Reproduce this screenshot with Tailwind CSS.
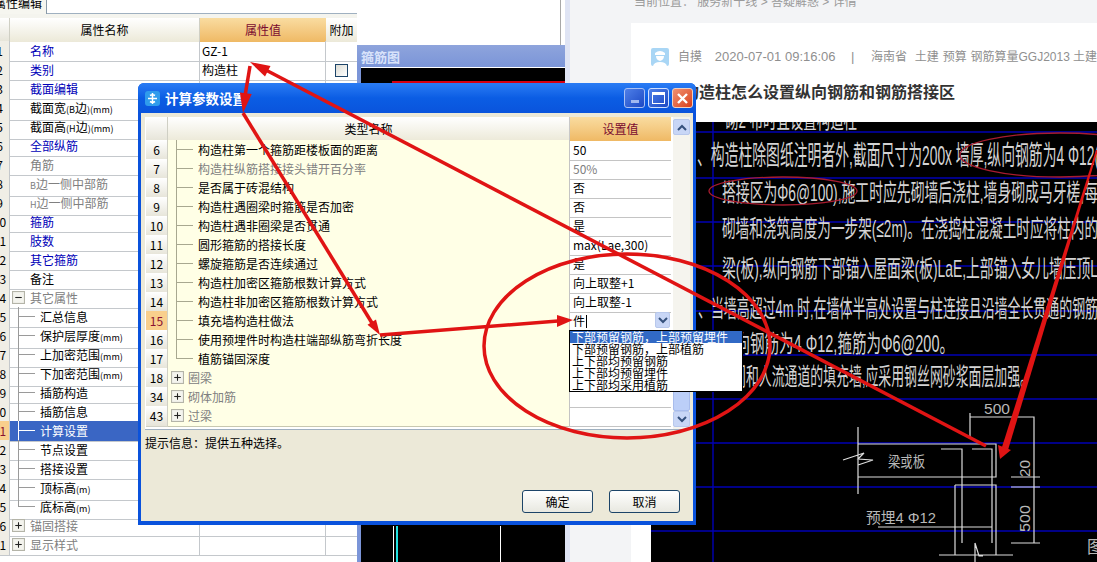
<!DOCTYPE html>
<html lang="zh-CN">
<head>
  <meta charset="UTF-8">
  <title>计算参数设置</title>
  <script src="https://cdn.jsdelivr.net/npm/@tailwindcss/browser@4"></script>
</head>
<body class="w-[1097px] h-[562px] overflow-hidden bg-white text-[12px] leading-[18px] text-black font-['Noto_Sans_CJK_SC',sans-serif]">
  <div class="relative w-[1097px] h-[562px] overflow-hidden flex">

    <!-- Property editor -->
    <div class="w-[357px] shrink-0 flex flex-col bg-white">
      <div class="h-[14px] flex overflow-hidden">
        <div class="w-[47px] h-[14px] border-r border-[#8a9aa8] bg-[#f6f6f0] overflow-hidden">
          <div class="-ml-[6px] -mt-[6px] whitespace-nowrap">属性编辑</div>
        </div>
        <div class="flex-1 border-b border-[#9fb0c0]"></div>
      </div>
      <div class="h-[4px] bg-[#f4f4ee]"></div>
      <div class="grid grid-cols-[10px_190px_126px_31px] h-[23px] text-center leading-[24px]">
        <div class="bg-linear-to-b from-white to-[#e6e4d8] border-r border-[#cfcfc4]"></div>
        <div class="bg-linear-to-b from-white to-[#ece9d8] border-r border-[#cfcfc4]">属性名称</div>
        <div class="bg-linear-to-b from-[#f9dca0] to-[#efb964] text-[#7a0b30]">属性值</div>
        <div class="bg-linear-to-b from-white to-[#ece9d8]">附加</div>
      </div>
      <div id="propRows"></div>
    </div>

    <!-- Stirrup diagram window -->
    <div class="w-[208px] shrink-0 flex flex-col bg-white">
      <div class="h-[45px] border-r border-[#a8a8a8] mr-[4px]"></div>
      <div class="h-[22px] bg-linear-to-b from-[#8ea4dc] to-[#7b95d8] pl-[4px] text-[13px] leading-[24px] font-bold text-[#d8e2fa]">箍筋图</div>
      <div class="flex-1 bg-[#7b95d8] pl-[4px]">
        <div class="relative h-full bg-black border-t border-white">
          <div class="absolute left-[31px] right-0 top-[13px] h-[3px] bg-[#d80010]"></div>
          <div class="absolute left-[32px] top-[458px] bottom-0 w-px bg-white"></div>
          <div class="absolute left-[35px] top-[458px] bottom-0 w-[2px] bg-[#20e0e0]"></div>
          <div class="absolute left-[139px] top-[458px] bottom-0 w-px bg-white"></div>
        </div>
      </div>
    </div>

    <div class="w-[5px] shrink-0 bg-[#dfe4f4]"></div>

    <!-- Article page -->
    <div class="flex-1 min-w-0 flex flex-col bg-[#f3f4f6] pl-[61px]">
      <div class="h-[23px] relative overflow-hidden">
        <div class="-mt-[6px] pl-[3px] whitespace-nowrap text-[12px] leading-[16px] text-[#9a9a9a] font-['Liberation_Sans','Noto_Sans_CJK_SC',sans-serif]">当前位置： 服务新干线 &gt; 答疑解惑 &gt; 详情</div>
      </div>
      <div class="flex-1 min-h-0 bg-white pl-[20px] flex flex-col overflow-hidden font-['Liberation_Sans','Noto_Sans_CJK_SC',sans-serif]">
        <div class="h-[50px] pt-[18px] flex items-center whitespace-nowrap text-[12px] text-[#8f8f8f]">
          <svg class="w-[18px] h-[18px] shrink-0" viewBox="0 0 18 18">
            <rect width="18" height="18" rx="2" fill="#a9d6f5"/>
            <path d="M4 5q5-4 10 0v2H4zM5 8h8q0 4-4 5-4-1-4-5zM2 18q1-4 7-4t7 4z" fill="#fff"/>
          </svg>
          <span class="ml-[9px] w-[37px]">自摸</span>
          <span class="w-[137px] text-[13px]">2020-07-01 09:16:06</span>
          <span class="w-[20px] text-[13px]">|</span>
          <span class="w-[44px]">海南省</span>
          <span class="w-[28px]">土建</span>
          <span class="w-[28px]">预算</span>
          <span class="w-[103px]">钢筋算量GGJ2013</span>
          <span>土建</span>
        </div>
        <div class="h-[49px] pt-[8px] text-[16px] leading-[24px] font-bold text-[#333] whitespace-nowrap">填充构造柱怎么设置纵向钢筋和钢筋搭接区</div>
        <svg class="flex-1 min-h-0 w-[446px] bg-black" viewBox="651 122 446 440" font-size="24" fill="#d4d4d4">
          <g stroke="#0000b4" stroke-width="1.4">
            <path d="M651 132H1097M651 178H1097M651 222H1097M651 266H1097M651 311H1097M651 355H1097M651 399H1097M651 443H1097M651 487H1097M651 531H1097M713 122V562"/>
          </g>
          <g>
            <text x="725" y="128" textLength="132" lengthAdjust="spacingAndGlyphs">砌2 布时宜设置构造柱</text>
            <text x="697" y="165" font-size="27" textLength="402" lengthAdjust="spacingAndGlyphs">、构造柱除图纸注明者外,截面尺寸为200x 墙厚,纵向钢筋为4 Φ12(</text>
            <text x="722" y="201" textLength="376" lengthAdjust="spacingAndGlyphs">搭接区为Φ6@100),施工时应先砌墙后浇柱,墙身砌成马牙槎,每</text>
            <text x="722" y="237" textLength="376" lengthAdjust="spacingAndGlyphs">砌墙和浇筑高度为一步架(≤2m)。在浇捣柱混凝土时应将柱内的</text>
            <text x="722" y="277" textLength="376" lengthAdjust="spacingAndGlyphs">梁(板),纵向钢筋下部锚入屋面梁(板)LaE,上部锚入女儿墙压顶L</text>
            <text x="698" y="317" textLength="400" lengthAdjust="spacingAndGlyphs">、当墙高超过4m 时,在墙体半高处设置与柱连接且沿墙全长贯通的钢筋</text>
            <text x="721" y="352" textLength="233" lengthAdjust="spacingAndGlyphs">纵向钢筋为4 Φ12,箍筋为Φ6@200。</text>
            <text x="733" y="385" textLength="300" lengthAdjust="spacingAndGlyphs">门和人流通道的填充墙,应采用钢丝网砂浆面层加强。</text>
          </g>
          <!-- detail drawing -->
          <path d="M858 427V494M858 444H996V477H858M843 460L864 453L858 459L873 460L858 465M941 449H962V543M972 449H992V543M955 485H996V555M955 485V555M939 555H1013M970 413V437M970 417H1034V543M1011 477H1040M1011 487H1040M1011 543H1040M878 527H992M975 543L975 562M975 543L979 556L983 556" fill="none" stroke="#dcdcdc" stroke-width="1.2"/>
          <g font-size="15" fill="#b8b8b8">
            <text x="984" y="414" textLength="26" lengthAdjust="spacingAndGlyphs">500</text>
            <text x="888" y="467" textLength="37" lengthAdjust="spacingAndGlyphs">梁或板</text>
            <text x="866" y="523" textLength="70" lengthAdjust="spacingAndGlyphs">预埋4 Φ12</text>
            <text transform="translate(1030 477) rotate(-90)" textLength="17" lengthAdjust="spacingAndGlyphs">20</text>
            <text transform="translate(1030 532) rotate(-90)" textLength="27" lengthAdjust="spacingAndGlyphs">500</text>
            <text x="1087" y="553" font-size="17">图</text>
          </g>
          <g fill="none" stroke="#a81c30" stroke-width="1.3">
            <ellipse cx="1060" cy="155" rx="100" ry="22"/>
            <ellipse cx="783" cy="191" rx="74" ry="14"/>
          </g>
        </svg>
      </div>
    </div>

    <!-- Dialog -->
    <div class="absolute left-[138px] top-[83px] w-[558px] h-[442px] flex flex-col rounded-t-[6px] bg-[#0a52dc] px-[3px] pb-[4px]">
      <div class="h-[30px] shrink-0 -mx-[3px] pl-[7px] pr-[3px] rounded-t-[6px] flex items-center bg-linear-to-b from-[#2a7cf4] via-[#0b5de4] to-[#0a54dc]">
        <svg class="w-[15px] h-[15px] shrink-0" viewBox="0 0 15 15">
          <rect width="15" height="15" rx="3" fill="#2f9bec"/>
          <path d="M7.5 2V13M3 7.5H12M5 4.5Q7.5 3 10 4.5M5 10.5Q7.5 12 10 10.5" fill="none" stroke="#fff" stroke-width="1.5"/>
        </svg>
        <span class="ml-[5px] text-[13.5px] font-bold text-white">计算参数设置</span>
        <div class="ml-auto flex gap-[3px]">
          <div class="w-[21px] h-[20px] rounded-[3px] border border-[#a8c0f4] bg-linear-to-br from-[#4f7fe8] to-[#1c48c4] flex items-end justify-center pb-[4px]">
            <div class="w-[8px] h-[3px] bg-[#9fb8f0]"></div>
          </div>
          <div class="w-[21px] h-[20px] rounded-[3px] border border-[#cfe0ff] bg-linear-to-br from-[#4f7fe8] to-[#1c48c4] flex items-center justify-center">
            <div class="w-[13px] h-[12px] border border-white border-t-[3px]"></div>
          </div>
          <div class="w-[21px] h-[20px] rounded-[3px] border border-[#f0d0c0] bg-linear-to-br from-[#f09070] to-[#d83c14] flex items-center justify-center">
            <svg class="w-[13px] h-[13px]" viewBox="0 0 13 13"><path d="M2 2L11 11M11 2L2 11" stroke="#fff" stroke-width="2.4"/></svg>
          </div>
        </div>
      </div>
      <div class="flex-1 min-h-0 bg-[#ece9d8] pl-[4px] pr-[3px] pt-[4px] flex flex-col">
        <div class="h-[313px] shrink-0 flex bg-white border-b border-[#9fb0c0]">
          <div class="w-[525px] shrink-0 ml-px">
            <div class="grid grid-cols-[22px_401px_102px] h-[23px] text-center leading-[24px]">
              <div class="bg-linear-to-b from-white to-[#e6e4d8] border-r border-[#cfcfc4]"></div>
              <div class="bg-linear-to-b from-white to-[#ece9d8]">类型名称</div>
              <div class="bg-linear-to-b from-[#f9dca0] to-[#efb964] text-[#7a0b30] border-l border-[#c8c8c8]">设置值</div>
            </div>
            <div id="paramRows"></div>
          </div>
          <!-- scrollbar -->
          <div class="w-[18px] ml-[2px] flex flex-col bg-[#f5f4ee]">
            <div class="h-[16px] mt-[2px] rounded-[2px] border border-[#b8c8ec] bg-[#c8d6f6] flex items-center justify-center">
              <svg class="w-[10px] h-[7px]" viewBox="0 0 10 7"><path d="M1 6L5 2L9 6" fill="none" stroke="#34507c" stroke-width="2"/></svg>
            </div>
            <div class="h-[205px]"></div>
            <div class="flex-1 bg-[#bccff8] border border-[#a8bcec] rounded-[2px]"></div>
            <div class="h-[16px] mb-[2px] rounded-[2px] border border-[#b8c8ec] bg-[#c8d6f6] flex items-center justify-center">
              <svg class="w-[10px] h-[7px]" viewBox="0 0 10 7"><path d="M1 1L5 5L9 1" fill="none" stroke="#34507c" stroke-width="2"/></svg>
            </div>
          </div>
        </div>
        <div class="pt-[4px] text-[12px] leading-[18px] whitespace-nowrap">提示信息：提供五种选择。</div>
        <div class="mt-auto flex justify-end gap-[16px] pr-[10px] pb-[8px]">
          <button class="w-[71px] h-[23px] rounded-[3px] border border-[#1c4468] bg-linear-to-b from-white to-[#e8e8e0] text-[12px]">确定</button>
          <button class="w-[71px] h-[23px] rounded-[3px] border border-[#1c4468] bg-linear-to-b from-white to-[#e8e8e0] text-[12px]">取消</button>
        </div>
      </div>
    </div>

    <!-- Combo dropdown -->
    <div class="absolute left-[569px] top-[330px] w-[174px] h-[62px] bg-white border border-black text-[12px] leading-[12px] whitespace-nowrap">
      <div class="h-[12px] pl-[2px] bg-[#3169c5] text-white">下部预留钢筋，上部预留埋件</div>
      <div class="h-[12px] pl-[2px]">下部预留钢筋，上部植筋</div>
      <div class="h-[12px] pl-[2px]">上下部均预留钢筋</div>
      <div class="h-[12px] pl-[2px]">上下部均预留埋件</div>
      <div class="h-[12px] pl-[2px]">上下部均采用植筋</div>
    </div>

    <!-- Red markup drawn over the screenshot -->
    <svg class="absolute left-0 top-0 w-[1097px] h-[562px] pointer-events-none" viewBox="0 0 1097 562">
      <g fill="none" stroke="#e01414">
        <ellipse cx="627" cy="346" rx="143" ry="92" stroke-width="3.5"/>
        <path d="M262 68L986 446" stroke-width="3.5"/>
        <path d="M250 66L245 96" stroke-width="3.5"/>
        <path d="M243 113L372 323" stroke-width="3.5"/>
        <path d="M380 335L558 321" stroke-width="3.5"/>
      </g>
      <g fill="#e01414">
        <polygon points="250,62 270.5,66 265,76.6"/>
        <polygon points="243,113 239.9,92.4 251.7,94"/>
        <polygon points="380,335 367.5,324.8 376,319.6"/>
        <polygon points="573,320 557,315 557,327"/>
        <polygon points="1000,459 1011,450 998,445"/>
        <polygon points="1002,447 1008,450 1098,150 1096,150"/>
      </g>
    </svg>
  </div>

  <script>
    // Property grid rows: [row number, label, text colour, kind]
    const BLUE = 'text-[#0000b8]';
    const GRAY = 'text-[#808080]';
    const BLACK = 'text-black';

    // units are set smaller, the source font has narrow latin glyphs
    const unit = text => `<span class="text-[9px]">${text}</span>`;

    const propRows = [
      [1, '名称', BLUE], [2, '类别', BLUE], [3, '截面编辑', BLUE], [4, `截面宽${unit('(B')}边${unit(')(mm)')}`, BLACK],
      [5, `截面高${unit('(H')}边${unit(')(mm)')}`, BLACK], [6, '全部纵筋', BLUE], [7, '角筋', GRAY], [8, `${unit('B')}边一侧中部筋`, GRAY],
      [9, `${unit('H')}边一侧中部筋`, GRAY], [10, '箍筋', BLUE], [11, '肢数', BLUE], [12, '其它箍筋', BLUE],
      [13, '备注', BLACK], [14, '其它属性', GRAY, 'minus'], [15, '汇总信息', BLACK, 'child'],
      [16, `保护层厚度${unit('(mm)')}`, BLACK, 'child'], [17, `上加密范围${unit('(mm)')}`, BLACK, 'child'],
      [18, `下加密范围${unit('(mm)')}`, BLACK, 'child'], [19, '插筋构造', BLACK, 'child'], [20, '插筋信息', BLACK, 'child'],
      [21, '计算设置', 'text-white', 'selected'], [22, '节点设置', BLACK, 'child'], [23, '搭接设置', BLACK, 'child'],
      [24, `顶标高${unit('(m)')}`, BLACK, 'child'], [25, `底标高${unit('(m)')}`, BLACK, 'last'], [26, '锚固搭接', GRAY, 'plus'],
      [41, '显示样式', GRAY, 'plus']
    ];

    const paramRows = [
      [6, '构造柱第一个箍筋距楼板面的距离', BLACK, 'child', '50'],
      [7, '构造柱纵筋搭接接头错开百分率', GRAY, 'child', '50%'],
      [8, '是否属于砖混结构', BLACK, 'child', '否'],
      [9, '构造柱遇圈梁时箍筋是否加密', BLACK, 'child', '否'],
      [10, '构造柱遇非圈梁是否贯通', BLACK, 'child', '是'],
      [11, '圆形箍筋的搭接长度', BLACK, 'child', 'max(Lae,300)'],
      [12, '螺旋箍筋是否连续通过', BLACK, 'child', '是'],
      [13, '构造柱加密区箍筋根数计算方式', BLACK, 'child', '向上取整+1'],
      [14, '构造柱非加密区箍筋根数计算方式', BLACK, 'child', '向上取整-1'],
      [15, '填充墙构造柱做法', BLACK, 'child', ''],
      [16, '使用预埋件时构造柱端部纵筋弯折长度', BLACK, 'child', ''],
      [17, '植筋锚固深度', BLACK, 'last', ''],
      [18, '圈梁', GRAY, 'plus', ''],
      [34, '砌体加筋', GRAY, 'plus', ''],
      [43, '过梁', GRAY, 'plus', '']
    ];

    function expander(kind, left) {
      const bar = kind === 'plus' ? '<path d="M6 3V9" stroke="#222"/>' : '';
      return `<svg class="absolute top-[3px] w-[13px] h-[13px] ${left}" viewBox="0 0 12 12">
        <rect x=".5" y=".5" width="11" height="11" fill="#f4f4ee" stroke="#b4b4a8"/>
        <path d="M3 6H9" stroke="#222"/>${bar}</svg>`;
    }

    function treeLines(kind, colour) {
      if (kind !== 'child' && kind !== 'last' && kind !== 'selected') return '';
      const upright = kind === 'last'
        ? `<span class="absolute left-[8px] top-0 h-[10px] w-px ${colour}"></span>`
        : `<span class="absolute left-[8px] top-0 bottom-0 w-px ${colour}"></span>`;
      return `${upright}<span class="absolute left-[8px] top-[9px] w-[17px] h-px ${colour}"></span>`;
    }

    document.getElementById('propRows').innerHTML = propRows.map(([num, label, colour, kind]) => {
      const isSelected = kind === 'selected';
      const isGroup = kind === 'plus' || kind === 'minus';
      const pad = isGroup || !kind ? 'pl-[20px]' : 'pl-[30px]';
      return `
        <div class="grid grid-cols-[10px_190px_126px_31px] h-[19px]">
          <div class="overflow-hidden border-b border-r border-[#c4c8cc] ${num === 21 ? 'bg-[#f9cf8c] text-[#8a1030]' : 'bg-[#f0eee6]'}">
            <div class="-ml-[11px] w-[21px] text-center leading-[20px]">${num}</div>
          </div>
          <div class="relative whitespace-nowrap leading-[20px] border-b border-r border-[#c4c8cc] ${pad} ${colour} ${isSelected ? 'bg-[#3a66c4]' : ''}">
            ${isGroup ? expander(kind, 'left-[2px]') : ''}
            ${treeLines(kind, isSelected ? 'bg-white' : 'bg-[#9a9a9a]')}
            ${label}
          </div>
          <div class="border-b border-r border-[#c4c8cc] pl-[2px] leading-[20px]">${num === 1 ? 'GZ-1' : num === 2 ? '构造柱' : ''}</div>
          <div class="border-b border-[#c4c8cc] flex items-center justify-center">
            ${num === 2 ? '<div class="w-[13px] h-[13px] border border-[#1c4468] bg-linear-to-br from-[#dcdcd4] to-white"></div>' : ''}
          </div>
        </div>`;
    }).join('');

    document.getElementById('paramRows').innerHTML = paramRows.map(([num, label, colour, kind, value]) => {
      const isGroup = kind === 'plus';
      const isCombo = num === 15;
      return `
        <div class="grid grid-cols-[22px_401px_102px] h-[19px]">
          <div class="border-b border-r border-[#d0d0c4] text-center leading-[20px] ${isCombo ? 'bg-[#f9cf8c] text-[#8a1030]' : 'bg-linear-to-b from-white to-[#e6e4d8]'}">${num}</div>
          <div class="relative whitespace-nowrap leading-[20px] bg-[#ffffe6] border-b border-[#c8c8b0] ${isGroup ? 'pl-[20px]' : 'pl-[30px]'} ${colour}">
            ${isGroup ? expander(kind, 'left-[3px]') : ''}
            ${treeLines(kind, 'bg-[#a8a890]')}
            ${label}
          </div>
          <div class="relative border-l border-b border-[#c4c4c4] pl-[3px] leading-[20px] ${colour}">
            ${isCombo ? `<span>件</span><span class="inline-block w-px h-[13px] bg-black ml-[1px] align-[-2px]"></span>
              <div class="absolute right-[1px] top-[1px] w-[15px] h-[16px] rounded-[2px] border border-[#b8c8ec] bg-[#c8d6f6] flex items-center justify-center">
                <svg class="w-[10px] h-[7px]" viewBox="0 0 10 7"><path d="M1 1L5 5L9 1" fill="none" stroke="#34507c" stroke-width="2"/></svg>
              </div>` : value}
          </div>
        </div>`;
    }).join('');
  </script>
</body>
</html>
